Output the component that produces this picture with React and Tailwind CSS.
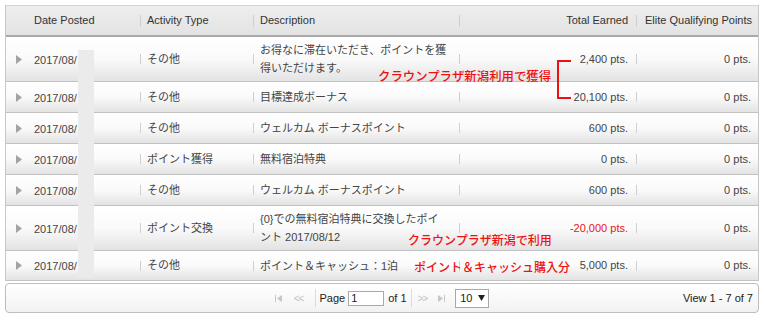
import React from 'react';

const rows = [
    { date: '2017/08/', type: 'その他', desc: ['お得なに滞在いただき、ポイントを獲', '得いただけます。'], total: '2,400 pts.', elite: '0 pts.', h: 'h-[45px]' },
    { date: '2017/08/', type: 'その他', desc: ['目標達成ボーナス'], total: '20,100 pts.', elite: '0 pts.', h: 'h-[31px]' },
    { date: '2017/08/', type: 'その他', desc: ['ウェルカム ボーナスポイント'], total: '600 pts.', elite: '0 pts.', h: 'h-[31px]' },
    { date: '2017/08/', type: 'ポイント獲得', desc: ['無料宿泊特典'], total: '0 pts.', elite: '0 pts.', h: 'h-[31px]' },
    { date: '2017/08/', type: 'その他', desc: ['ウェルカム ボーナスポイント'], total: '600 pts.', elite: '0 pts.', h: 'h-[31px]' },
    { date: '2017/08/', type: 'ポイント交換', desc: ['{0}での無料宿泊特典に交換したポイ', 'ント 2017/08/12'], total: '-20,000 pts.', elite: '0 pts.', h: 'h-[45px]', red: true },
    { date: '2017/08/', type: 'その他', desc: ['ポイント＆キャッシュ：1泊'], total: '5,000 pts.', elite: '0 pts.', h: 'h-[30px]' },
];

const cols = 'grid grid-cols-[22px_112px_113px_206px_177px_122px]';

// thin grey divider that jqGrid draws between columns
const Sep = ({ tall }) => (
    <span className={`block w-px shrink-0 bg-[#cfcfcf] ${tall ? 'h-[12px]' : 'h-[10px]'}`} />
);

const Caret = () => (
    <svg width="6" height="9" viewBox="0 0 6 9" className="ml-[10px]">
        <polygon points="0,0 6,4.5 0,9" fill="#a3a3a3" />
    </svg>
);

const FirstIcon = () => (
    <svg width="7" height="7" viewBox="0 0 7 7">
        <rect x="0" y="0" width="1" height="7" fill="#c6c6c6" />
        <polygon points="7,0 2,3.5 7,7" fill="#c6c6c6" />
    </svg>
);

const LastIcon = () => (
    <svg width="7" height="7" viewBox="0 0 7 7">
        <polygon points="0,0 5,3.5 0,7" fill="#c6c6c6" />
        <rect x="6" y="0" width="1" height="7" fill="#c6c6c6" />
    </svg>
);

const App = () => {
    return (
        <div className="relative w-[765px] h-[320px] overflow-hidden bg-white text-[11px] text-[#444] font-['Liberation_Sans','Noto_Sans_CJK_JP',sans-serif]">
            <div className="ml-[5px] mt-[5px] w-[754px]">
                {/* Grid */}
                <div className="border-x border-[#c8c8c8]">
                    {/* Header */}
                    <div className={`${cols} h-[32px] items-center border-t border-[#d6d6d6] border-b-2 border-b-[#a9a9a9] bg-linear-to-b from-[#eeeeee] to-[#e3e3e3] text-[#333]`}>
                        <div />
                        <div className="pl-[6px]">Date Posted</div>
                        <div className="flex items-center gap-[6px]"><Sep tall />Activity Type</div>
                        <div className="flex items-center gap-[6px]"><Sep tall />Description</div>
                        <div className="flex items-center justify-between pr-[8px]"><Sep tall />Total Earned</div>
                        <div className="flex items-center justify-between pr-[6px]"><Sep tall />Elite Qualifying Points</div>
                    </div>

                    {/* Rows */}
                    {rows.map((r, i) => (
                        <div
                            key={i}
                            className={`${cols} ${r.h} items-center border-b border-[#c2c2c2] bg-linear-to-b from-white via-[#fafafa] to-[#e3e3e3]`}
                        >
                            <div className="flex items-center"><Caret /></div>
                            <div className="pl-[6px] pt-[2px]">{r.date}</div>
                            <div className="flex items-center gap-[6px]"><Sep />{r.type}</div>
                            <div className="flex items-center gap-[6px]">
                                <Sep />
                                <div className="leading-[18px]">
                                    {r.desc.map((line, j) => <div key={j}>{line}</div>)}
                                </div>
                            </div>
                            <div className="flex items-center justify-between pr-[8px]">
                                <Sep />
                                <span className={r.red ? 'text-[#e8141b]' : ''}>{r.total}</span>
                            </div>
                            <div className="flex items-center justify-between pr-[7px]">
                                <Sep />
                                <span>{r.elite}</span>
                            </div>
                        </div>
                    ))}
                </div>

                {/* Pager */}
                <div className="mt-[2px] h-[30px] grid grid-cols-[1fr_auto_1fr] items-center rounded-[4px] border border-[#bdbdbd] bg-linear-to-b from-white to-[#f2f2f2] text-[#222]">
                    <div />
                    <div className="flex items-center">
                        <FirstIcon />
                        <span className="ml-[12px] text-[10px] text-[#c2c2c2] tracking-[-1px]">&lt;&lt;</span>
                        <span className="ml-[12px] block w-px h-[18px] bg-[#dcdcdc]" />
                        <span className="ml-[3px]">Page</span>
                        <span className="ml-[3px] flex items-center w-[36px] h-[15px] border border-[#a9a9a9] bg-white pl-[2px] text-[11px] leading-none">1</span>
                        <span className="ml-[4px]">of 1</span>
                        <span className="ml-[4px] block w-px h-[18px] bg-[#dcdcdc]" />
                        <span className="ml-[6px] text-[10px] text-[#c2c2c2] tracking-[-1px]">&gt;&gt;</span>
                        <span className="ml-[11px]"><LastIcon /></span>
                        <span className="ml-[10px] flex items-center gap-[6px] w-[34px] h-[19px] border border-[#a9a9a9] bg-white pl-[4px] text-[11px]">
                            10
                            <svg width="7" height="6" viewBox="0 0 7 6"><polygon points="0,0 7,0 3.5,6" fill="#222" /></svg>
                        </span>
                    </div>
                    <div className="flex justify-end pr-[5px]">View 1 - 7 of 7</div>
                </div>
            </div>

            {/* Redacted strip over the dates */}
            <div className="absolute left-[78px] top-[50px] w-[16px] h-[228px] bg-[#ebebeb]" />

            {/* Red notes */}
            <div className="absolute left-[378px] top-[69px] text-[12.4px] leading-[16px] font-medium text-[#ee1111] whitespace-nowrap">
                クラウンプラザ新潟利用で獲得
            </div>
            <div className="absolute left-[557px] top-[60px] w-[14px] h-[39px] border-l-2 border-y-2 border-[#ee1111]" />
            <div className="absolute left-[408px] top-[233px] text-[12px] leading-[16px] font-medium text-[#ee1111] whitespace-nowrap">
                クラウンプラザ新潟で利用
            </div>
            <div className="absolute left-[414px] top-[260px] text-[12px] leading-[16px] font-medium text-[#ee1111] whitespace-nowrap">
                ポイント＆キャッシュ購入分
            </div>
        </div>
    );
};

export default App;
